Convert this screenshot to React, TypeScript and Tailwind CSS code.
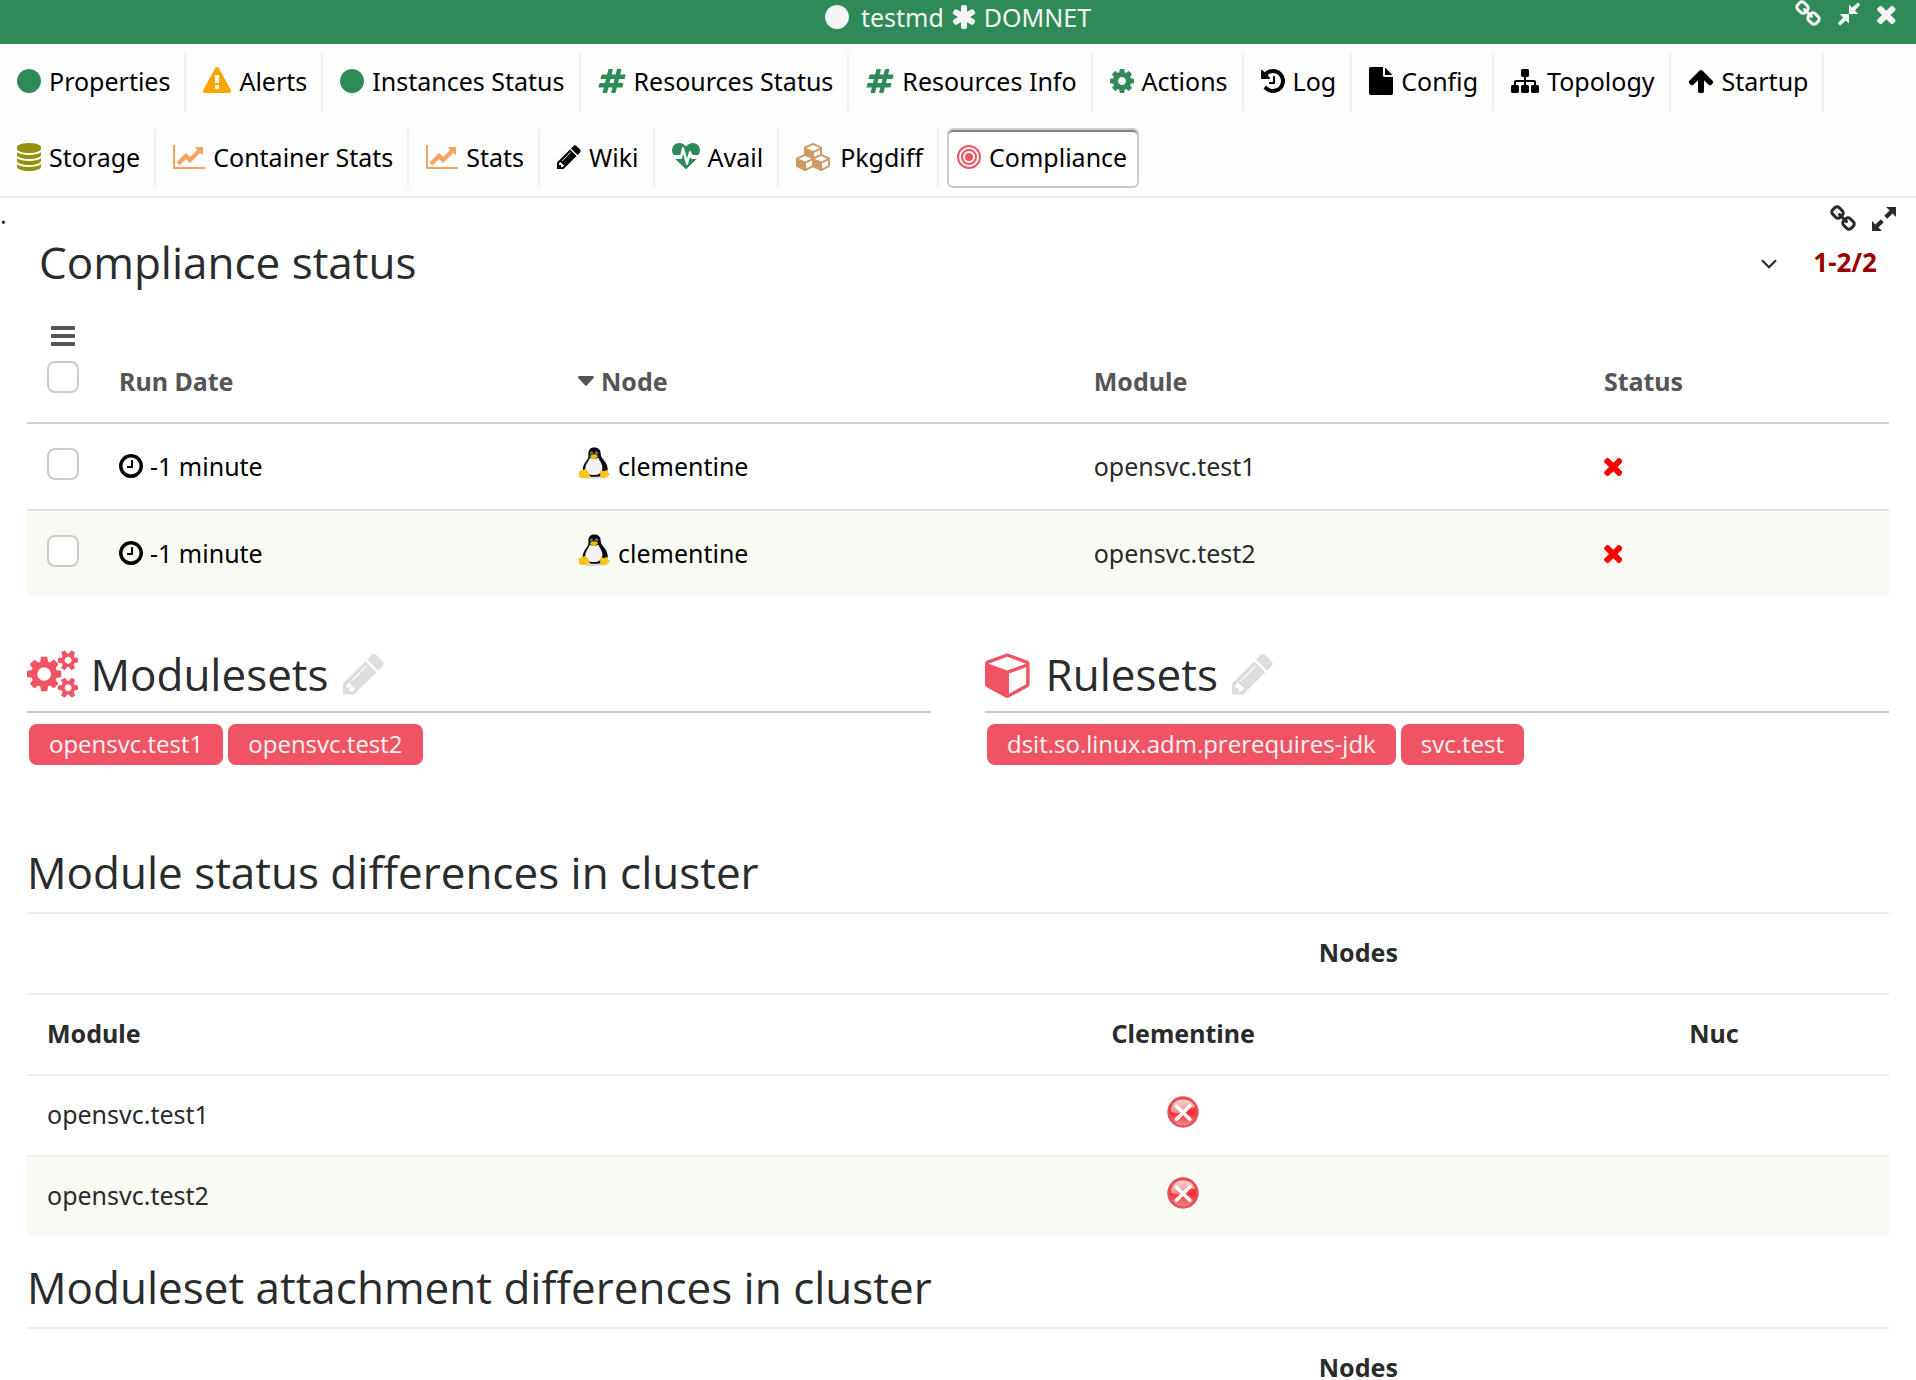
import type { ReactNode } from "react";

/* ---------- icons ---------- */

type Glyph = { box: string; d: string };

const circleD =
  "M1664 896q0 209-103 385.5t-279.5 279.5-385.5 103-385.5-103-279.5-279.5-103-385.5 103-385.5 279.5-279.5 385.5-103 385.5 103 279.5 279.5 103 385.5z";

const glyphs = {
  circle: { box: "128 0 1536 1792", d: circleD },
  warning: {
    box: "0 0 1792 1792",
    d: "M1024 1375v-190q0-14-9.5-23.5t-22.5-9.5h-192q-13 0-22.5 9.5t-9.5 23.5v190q0 14 9.5 23.5t22.5 9.5h192q13 0 22.5-9.5t9.5-23.5zm-2-374l18-459q0-12-10-19-13-11-24-11h-220q-11 0-24 11-10 7-10 21l17 457q0 10 10 16.5t24 6.5h185q14 0 23.5-6.5t10.5-16.5zm-14-934l768 1408q35 63-2 126-17 29-46.5 46t-63.5 17h-1536q-34 0-63.5-17t-46.5-46q-37-63-2-126l768-1408q17-31 47-49t65-18 65 18 47 49z",
  },
  hashtag: {
    box: "0 0 1792 1792",
    d: "M991 1024l64-256h-254l-64 256h254zm768-504l-56 224q-7 24-31 24h-327l-64 256h311q15 0 25 12 10 14 6 28l-56 224q-5 24-31 24h-327l-81 328q-7 24-31 24h-224q-16 0-26-12-9-12-6-28l78-312h-254l-81 328q-7 24-31 24h-225q-15 0-25-12-9-12-6-28l78-312h-311q-15 0-25-12-9-12-6-28l56-224q7-24 31-24h327l64-256h-311q-15 0-25-12-10-14-6-28l56-224q5-24 31-24h327l81-328q7-24 32-24h224q15 0 25 12 9 12 6 28l-78 312h254l81-328q7-24 32-24h224q15 0 25 12 9 12 6 28l-78 312h311q15 0 25 12 9 12 6 28z",
  },
  cog: {
    box: "128 0 1536 1792",
    d: "M1152 896q0-106-75-181t-181-75-181 75-75 181 75 181 181 75 181-75 75-181zm512-109v222q0 12-8 23t-20 13l-185 28q-19 54-39 91 35 50 107 138 10 12 10 25t-9 23q-27 37-99 108t-94 71q-12 0-26-9l-138-108q-44 23-91 38-16 136-29 186-7 28-36 28h-222q-14 0-24.5-8.5t-11.5-21.5l-28-184q-49-16-90-37l-141 107q-10 9-25 9-14 0-25-11-126-114-165-168-7-10-7-23 0-12 8-23 15-21 51-66.5t54-70.5q-27-50-41-99l-183-27q-13-2-21-12.5t-8-23.5v-222q0-12 8-23t19-13l186-28q14-46 39-92-40-57-107-138-10-12-10-24 0-10 9-23 26-36 98.5-107.5t94.5-71.5q13 0 26 10l138 107q44-23 91-38 16-136 29-186 7-28 36-28h222q14 0 24.5 8.5t11.5 21.5l28 184q49 16 90 37l142-107q9-9 24-9 13 0 25 10 129 119 165 170 7 8 7 22 0 12-8 23-15 21-51 66.5t-54 70.5q26 50 41 98l183 28q13 2 21 12.5t8 23.5z",
  },
  history: {
    box: "128 0 1536 1792",
    d: "M1664 896q0 156-61 298t-164 245-245 164-298 61q-172 0-327-72.5t-264-204.5q-7-10-6.5-22.5t8.5-20.5l137-138q10-9 25-9 16 2 23 12 73 95 179 147t225 52q104 0 198.5-40.5t163.5-109.5 109.5-163.5 40.5-198.5-40.5-198.5-109.5-163.5-163.5-109.5-198.5-40.5q-98 0-188 35.5t-160 101.5l137 138q31 30 14 69-17 40-59 40h-448q-26 0-45-19t-19-45v-448q0-42 40-59 39-17 69 14l130 129q107-101 244.5-156.5t284.5-55.5q156 0 298 61t245 164 164 245 61 298zm-640-288v448q0 14-9 23t-23 9h-320q-14 0-23-9t-9-23v-64q0-14 9-23t23-9h224v-352q0-14 9-23t23-9h64q14 0 23 9t9 23z",
  },
  file: {
    box: "128 0 1536 1792",
    d: "M1152 512v-472q22 14 36 28l408 408q14 14 28 36h-472zm-128 32q0 40 28 68t68 28h544v1056q0 40-28 68t-68 28h-1344q-40 0-68-28t-28-68v-1600q0-40 28-68t68-28h800v544z",
  },
  sitemap: {
    box: "0 0 1792 1792",
    d: "M1792 1248v320q0 40-28 68t-68 28h-320q-40 0-68-28t-28-68v-320q0-40 28-68t68-28h96v-192h-512v192h96q40 0 68 28t28 68v320q0 40-28 68t-68 28h-320q-40 0-68-28t-28-68v-320q0-40 28-68t68-28h96v-192h-512v192h96q40 0 68 28t28 68v320q0 40-28 68t-68 28h-320q-40 0-68-28t-28-68v-320q0-40 28-68t68-28h96v-192q0-52 38-90t90-38h512v-192h-96q-40 0-68-28t-28-68v-320q0-40 28-68t68-28h320q40 0 68 28t28 68v320q0 40-28 68t-68 28h-96v192h512q52 0 90 38t38 90v192h96q40 0 68 28t28 68z",
  },
  arrowUp: {
    box: "64 0 1664 1792",
    d: "M1675 971q0 51-37 90l-75 75q-38 38-91 38-54 0-90-38l-294-293v704q0 52-37.5 84.5t-90.5 32.5h-128q-53 0-90.5-32.5t-37.5-84.5v-704l-294 293q-36 38-90 38t-90-38l-75-75q-38-38-38-90 0-53 38-91l651-651q35-37 90-37 54 0 91 37l651 651q37 39 37 91z",
  },
  database: {
    box: "128 0 1536 1792",
    d: "M896 768q237 0 443-43t325-127v170q0 69-103 128t-280 93.5-385 34.5-385-34.5-280-93.5-103-128v-170q119 84 325 127t443 43zm0 768q237 0 443-43t325-127v170q0 69-103 128t-280 93.5-385 34.5-385-34.5-280-93.5-103-128v-170q119 84 325 127t443 43zm0-384q237 0 443-43t325-127v170q0 69-103 128t-280 93.5-385 34.5-385-34.5-280-93.5-103-128v-170q119 84 325 127t443 43zm0-1152q208 0 385 34.5t280 93.5 103 128v128q0 69-103 128t-280 93.5-385 34.5-385-34.5-280-93.5-103-128v-128q0-69 103-128t280-93.5 385-34.5z",
  },
  chart: {
    box: "0 0 2048 1792",
    d: "M2048 1536v128h-2048v-1536h128v1408h1920zm-128-1248v435q0 21-19.5 29.5t-35.5-7.5l-121-121-633 633q-10 10-23 10t-23-10l-233-233-416 416-192-192 585-585q10-10 23-10t23 10l233 233 464-464-121-121q-16-16-7.5-35.5t29.5-19.5h435q14 0 23 9t9 23z",
  },
  pencil: {
    box: "128 0 1536 1792",
    d: "M491 1536l91-91-235-235-91 91v107h128v128h107zm523-928q0-22-22-22-10 0-17 7l-542 542q-7 7-7 17 0 22 22 22 10 0 17-7l542-542q7-7 7-17zm-54-192l416 416-832 832h-416v-416zm683 96q0 53-37 90l-166 166-416-416 166-165q36-38 90-38 53 0 91 38l235 234q37 39 37 91z",
  },
  heartbeat: {
    box: "0 0 1792 1792",
    d: "M1280 1024h305q-5 6-10 10.5t-9 7.5l-3 4-623 600q-18 18-44 18t-44-18l-624-602q-5-2-21-20h369q22 0 39.5-13.5t22.5-34.5l70-281 190 667q6 20 23 33t39 13q21 0 38-13t23-33l146-485 56 112q18 35 57 35zm512-556q0 145-103 300h-369l-111-221q-8-17-25.5-27t-36.5-8q-45 5-56 46l-129 430-196-686q-6-20-23.5-33t-39.5-13-39 13.5-22 34.5l-116 464h-423q-103-155-103-300 0-220 127-344t351-124q62 0 126.5 21.5t120 58 95.5 68.5 76 68q36-36 76-68t95.5-68.5 120-58 126.5-21.5q224 0 351 124t127 344z",
  },
  cubes: {
    box: "0 0 2304 1792",
    d: "M640 1632l384-192v-314l-384 164v342zm-64-454l404-173-404-173-404 173zm1088 454l384-192v-314l-384 164v342zm-64-454l404-173-404-173-404 173zm-448-293l384-165v-266l-384 164v267zm-64-379l441-189-441-189-441 189zm1088 518v416q0 36-19 67t-52 47l-448 224q-25 14-57 14t-57-14l-448-224q-4-2-7-4-2 2-7 4l-448 224q-25 14-57 14t-57-14l-448-224q-33-16-52-47t-19-67v-416q0-38 21.5-70t56.5-48l434-186v-400q0-38 21.5-70t56.5-48l448-192q23-10 50-10t50 10l448 192q35 16 56.5 48t21.5 70v400l434 186q36 16 57 48t21 70z",
  },
  cube: {
    box: "0 0 1664 1792",
    d: "M896 1629l640-349v-636l-640 233v752zm-64-865l698-254-698-254-698 254zm832-252v768q0 35-18 65t-49 47l-704 384q-28 16-61 16t-61-16l-704-384q-31-17-49-47t-18-65v-768q0-40 23-73t61-47l704-256q22-8 44-8t44 8l704 256q38 14 61 47t23 73z",
  },
  cogs: {
    box: "0 0 1920 1792",
    d: "M896 896q0-106-75-181t-181-75-181 75-75 181 75 181 181 75 181-75 75-181zm768 512q0-52-38-90t-90-38-90 38-38 90q0 53 37.5 90.5t90.5 37.5 90.5-37.5 37.5-90.5zm0-1024q0-52-38-90t-90-38-90 38-38 90q0 53 37.5 90.5t90.5 37.5 90.5-37.5 37.5-90.5zm-384 421v185q0 10-7 19.5t-16 10.5l-155 24q-11 35-32 76 34 48 90 115 7 11 7 20 0 12-7 19-23 30-82.5 89.5t-78.5 59.5q-11 0-21-7l-115-90q-37 19-77 31-11 108-23 155-7 24-30 24h-186q-11 0-20-7.5t-10-17.5l-23-153q-34-10-75-31l-118 89q-7 7-20 7-11 0-21-8-144-133-144-160 0-9 7-19 10-14 41-53t47-61q-23-44-35-82l-152-24q-10-1-17-9.5t-7-19.5v-185q0-10 7-19.5t16-10.5l155-24q11-35 32-76-34-48-90-115-7-11-7-20 0-12 7-20 22-30 82-89t79-59q11 0 21 7l115 90q34-18 77-32 11-108 23-154 7-24 30-24h186q11 0 20 7.5t10 17.5l23 153q34 10 75 31l118-89q8-7 20-7 11 0 21 8 144 133 144 160 0 8-7 19-12 16-42 54t-45 60q23 48 34 82l152 23q10 2 17 10.5t7 19.5zm640 533v140q0 16-149 31-12 27-30 52 51 113 51 138 0 4-4 7-122 71-124 71-8 0-46-47t-52-68q-20 2-30 2t-30-2q-14 21-52 68t-46 47q-2 0-124-71-4-3-4-7 0-25 51-138-18-25-30-52-149-15-149-31v-140q0-16 149-31 13-29 30-52-51-113-51-138 0-4 4-7 4-2 35-20t59-34 30-16q8 0 46 46.5t52 67.5q20-2 30-2t30 2q51-71 92-112l6-2q4 0 124 70 4 3 4 7 0 25-51 138 17 23 30 52 149 15 149 31zm0-1024v140q0 16-149 31-12 27-30 52 51 113 51 138 0 4-4 7-122 71-124 71-8 0-46-47t-52-68q-20 2-30 2t-30-2q-14 21-52 68t-46 47q-2 0-124-71-4-3-4-7 0-25 51-138-18-25-30-52-149-15-149-31v-140q0-16 149-31 13-29 30-52-51-113-51-138 0-4 4-7 4-2 35-20t59-34 30-16q8 0 46 46.5t52 67.5q20-2 30-2t30 2q51-71 92-112l6-2q4 0 124 70 4 3 4 7 0 25-51 138 17 23 30 52 149 15 149 31z",
  },
  times: {
    box: "302 0 1188 1792",
    d: "M1490 1322q0 40-28 68l-136 136q-28 28-68 28t-68-28l-294-294-294 294q-28 28-68 28t-68-28l-136-136q-28-28-28-68t28-68l294-294-294-294q-28-28-28-68t28-68l136-136q28-28 68-28t68 28l294 294 294-294q28-28 68-28t68 28l136 136q28 28 28 68t-28 68l-294 294 294 294q28 28 28 68z",
  },
  asterisk: {
    box: "128 0 1536 1792",
    d: "M1546 1050q46 26 59.5 77.5t-12.5 97.5l-64 110q-26 46-77.5 59.5t-97.5-12.5l-266-153v307q0 52-38 90t-90 38h-128q-52 0-90-38t-38-90v-307l-266 153q-46 26-97.5 12.5t-77.5-59.5l-64-110q-26-46-12.5-97.5t59.5-77.5l266-154-266-154q-46-26-59.5-77.5t12.5-97.5l64-110q26-46 77.5-59.5t97.5 12.5l266 153v-307q0-52 38-90t90-38h128q52 0 90 38t38 90v307l266-153q46-26 97.5-12.5t77.5 59.5l64 110q26 46 12.5 97.5t-59.5 77.5l-266 154z",
  },
  chain: {
    box: "64 0 1664 1792",
    d: "M1520 1216q0-40-28-68l-208-208q-28-28-68-28-42 0-72 32 3 3 19 18.5t21.5 21.5 15 19 13 25.5 3.5 27.5q0 40-28 68t-68 28q-15 0-27.5-3.5t-25.5-13-19-15-21.5-21.5-18.5-19q-33 31-33 73 0 40 28 68l206 207q27 27 68 27 40 0 68-26l147-146q28-28 28-67zm-703-705q0-40-28-68l-206-207q-28-28-68-28-39 0-68 27l-147 146q-28 28-28 67 0 40 28 68l208 208q27 27 68 27 42 0 72-31-3-3-19-18.5t-21.5-21.5-15-19-13-25.5-3.5-27.5q0-40 28-68t68-28q15 0 27.5 3.5t25.5 13 19 15 21.5 21.5 18.5 19q33-31 33-73zm895 705q0 120-85 203l-147 146q-83 83-203 83-121 0-204-85l-206-207q-83-83-83-203 0-123 88-209l-88-88q-86 88-208 88-120 0-204-84l-208-208q-84-84-84-204t85-203l147-146q83-83 203-83 121 0 204 85l206 207q83 83 83 203 0 123-88 209l88 88q86-88 208-88 120 0 204 84l208 208q84 84 84 204z",
  },
  bars: {
    box: "128 0 1536 1792",
    d: "M1664 1344v128q0 26-19 45t-45 19h-1408q-26 0-45-19t-19-45v-128q0-26 19-45t45-19h1408q26 0 45 19t19 45zm0-512v128q0 26-19 45t-45 19h-1408q-26 0-45-19t-19-45v-128q0-26 19-45t45-19h1408q26 0 45 19t19 45zm0-512v128q0 26-19 45t-45 19h-1408q-26 0-45-19t-19-45v-128q0-26 19-45t45-19h1408q26 0 45 19t19 45z",
  },
  clock: {
    box: "128 0 1536 1792",
    d: "M1024 544v448q0 14-9 23t-23 9h-320q-14 0-23-9t-9-23v-64q0-14 9-23t23-9h224v-352q0-14 9-23t23-9h64q14 0 23 9t9 23zm416 352q0-148-73-273t-198-198-273-73-273 73-198 198-73 273 73 273 198 198 273 73 273-73 198-198 73-273zm224 0q0 209-103 385.5t-279.5 279.5-385.5 103-385.5-103-279.5-279.5-103-385.5 103-385.5 279.5-279.5 385.5-103 385.5 103 279.5 279.5 103 385.5z",
  },
} satisfies Record<string, Glyph>;

function Icon({ name, className = "" }: { name: keyof typeof glyphs; className?: string }) {
  return (
    <svg viewBox={glyphs[name].box} fill="currentColor" aria-hidden="true" className={`w-auto shrink-0 ${className}`}>
      <path d={glyphs[name].d} />
    </svg>
  );
}

function Bullseye() {
  return (
    <svg viewBox="128 0 1536 1792" fill="none" stroke="currentColor" strokeWidth="128" aria-hidden="true" className="h-7 w-auto shrink-0 text-[#f05464]">
      <circle cx="896" cy="896" r="256" fill="currentColor" stroke="none" />
      <circle cx="896" cy="896" r="448" />
      <circle cx="896" cy="896" r="704" />
    </svg>
  );
}

function ExpandIcon() {
  return (
    <svg viewBox="0 0 24 24" fill="currentColor" aria-hidden="true" className="size-6">
      <path d="M14 0h10v10l-3.4-3.4-5.4 5.2-3-3 5.4-5.2z" />
      <path d="M10 24H0V14l3.4 3.4 5.4-5.2 3 3-5.4 5.2z" />
    </svg>
  );
}

function CompressIcon() {
  return (
    <svg viewBox="0 0 24 24" fill="currentColor" aria-hidden="true" className="size-6">
      <path d="M12 12V2.4l3.2 3.2L20.900 .4l2.400 2.400-5.400 5.800 3.400 3.400z" />
      <path d="M12 12v9.600l-3.200-3.200L3.100 23.600.7 21.200l5.400-5.800L2.700 12z" />
    </svg>
  );
}

function Tux() {
  return (
    <svg viewBox="0 0 32 32" role="img" aria-label="Linux" className="size-8 shrink-0">
      <ellipse cx="16" cy="30" rx="14.500" ry="1.800" fill="#000" opacity=".14" />
      <path
        d="M16 .4c-3.900 0-5.700 2.700-5.600 6 .1 3.200.2 4.400-1.800 7.200C6.300 16.700 4.400 19.800 4.700 23.500c.3 3.800 5 6.300 11.500 6.300 7 0 13-2 13.500-6.300.5-4-1.900-8.300-4.600-11.300-1.900-2.300-2.400-3.600-2.500-6.200C22.500 2.200 19.900.4 16 .4z"
        fill="#0b0b0b"
      />
      <path
        d="M11.800 10.800c-.6 2.400-2.600 4.500-3.800 7.300-1.400 3.300-.8 6.500 1.900 8.400 2.700 2 8.800 2.200 11.500.3 2.700-1.900 3.500-5 2.700-8.200-.7-2.900-2.900-5.200-3.600-7.800-2.600 1.400-6.300 1.300-8.700 0z"
        fill="#f3f3f5"
      />
      <ellipse cx="13.600" cy="6.300" rx="1.500" ry="1.700" fill="#8a8a8a" />
      <ellipse cx="18.300" cy="6.300" rx="1.600" ry="1.800" fill="#8a8a8a" />
      <circle cx="14" cy="6.700" r=".8" fill="#111" />
      <circle cx="17.900" cy="6.700" r=".8" fill="#111" />
      <path d="M12 9.200c.9-1 2.500-1.900 4-1.900s3.200.8 4 1.800c-.4 1.500-2.400 2.900-4.100 2.900s-3.500-1.300-3.900-2.800z" fill="#f3b90c" />
      <path
        d="M5.200 23c-1 .6-3.200.4-4.100 1.400-.9 1.100.2 2.500-.3 3.900-.4 1.300.8 1.800 2.800 2.100 2 .3 4.300 1.200 6 .6 2.200-.7 2.800-2.500 1.700-4.300-1-1.700-2.700-4.700-4.300-4.600-.7.1-1.200.5-1.800.9z"
        fill="#f9c51c"
      />
      <path
        d="M22.700 23.600c1-1.200 1.900.3 3.200.3 1.500 0 2.800-1.500 3.500-.7.7.8.2 2 1.200 2.900 1 .9 1.600 1.500.3 2.500-1.400 1-3.300 2.300-5 2.600-1.900.3-3.600-.7-3.700-2.600-.1-1.700-.2-3.900.5-5z"
        fill="#f9c51c"
      />
    </svg>
  );
}

function ErrorBadge() {
  return (
    <svg viewBox="0 0 32 32" role="img" aria-label="Not compliant" className="mx-auto mb-2 block size-8">
      <defs>
        <linearGradient id="err-fill" x1="0" y1="0" x2="0" y2="1">
          <stop offset="0" stopColor="#ff4a4e" />
          <stop offset=".55" stopColor="#fb2f34" />
          <stop offset="1" stopColor="#ea9396" />
        </linearGradient>
        <linearGradient id="err-gloss" x1="0" y1="0" x2="0" y2="1">
          <stop offset="0" stopColor="#fbeaea" />
          <stop offset="1" stopColor="#ea9a9c" />
        </linearGradient>
      </defs>
      <circle cx="16" cy="16" r="14.500" fill="url(#err-fill)" stroke="#dc5358" strokeWidth="2.400" />
      <path d="M4 15.500C4 8 9 3.600 16 3.600c6.500 0 11 4 12 8-5 .2-8 1.400-12 3.900s-8 2.500-12 0z" fill="url(#err-gloss)" opacity=".85" />
      <path d="M9.600 10.200l13.200 13M22.800 10L9.400 23.200" stroke="#fff" strokeWidth="3.600" strokeLinecap="round" />
    </svg>
  );
}

/* ---------- tabs ---------- */

type Tab = { label: string; icon: keyof typeof glyphs; color: string };

const tabs: Tab[] = [
  { label: "Properties", icon: "circle", color: "text-[#2e8b57]" },
  { label: "Alerts", icon: "warning", color: "text-[#ffa500]" },
  { label: "Instances Status", icon: "circle", color: "text-[#2e8b57]" },
  { label: "Resources Status", icon: "hashtag", color: "text-[#2e8b57]" },
  { label: "Resources Info", icon: "hashtag", color: "text-[#2e8b57]" },
  { label: "Actions", icon: "cog", color: "text-[#2e8b57]" },
  { label: "Log", icon: "history", color: "text-black" },
  { label: "Config", icon: "file", color: "text-black" },
  { label: "Topology", icon: "sitemap", color: "text-black" },
  { label: "Startup", icon: "arrowUp", color: "text-black" },
  { label: "Storage", icon: "database", color: "text-[#95910f]" },
  { label: "Container Stats", icon: "chart", color: "text-[#f4a460]" },
  { label: "Stats", icon: "chart", color: "text-[#f4a460]" },
  { label: "Wiki", icon: "pencil", color: "text-black" },
  { label: "Avail", icon: "heartbeat", color: "text-[#2e8b57]" },
  { label: "Pkgdiff", icon: "cubes", color: "text-[#cd9965]" },
];

function TabBar() {
  return (
    <nav className="flex flex-wrap gap-y-[18px] border-b-2 border-[#eee] bg-[#fdfdfd] py-[9px] text-black">
      {tabs.map((t) => (
        <button key={t.label} type="button" className="flex h-[58px] items-center gap-2 border-r-2 border-[#f0f0f0] pr-[14px] pb-[2px] pl-[17px]">
          <Icon name={t.icon} className={`h-7 ${t.color}`} />
          {t.label}
        </button>
      ))}
      <button
        type="button"
        aria-pressed="true"
        className="-my-px ml-2 flex h-[60px] items-center gap-2 rounded-md border-2 border-[#ccc] bg-white pr-[10px] pb-[2px] pl-2 shadow-[inset_0_2px_0_#808080]"
      >
        <Bullseye />
        Compliance
      </button>
    </nav>
  );
}

/* ---------- shared pieces ---------- */

function Check({ label }: { label: string }) {
  return <input type="checkbox" aria-label={label} className="block size-8 appearance-none rounded-lg border-2 border-[#ccc] bg-white" />;
}

function IconButton({ label, children }: { label: string; children: ReactNode }) {
  return (
    <button type="button" aria-label={label} className="flex items-center">
      {children}
    </button>
  );
}

const runs = [
  { date: "-1 minute", node: "clementine", module: "opensvc.test1" },
  { date: "-1 minute", node: "clementine", module: "opensvc.test2" },
];

function StatusTable() {
  const th = "px-5 pb-[26px] text-left align-bottom border-b-2 border-[#d0d0d0]";
  const td = "border-b-2 border-[#e3e3e3] px-5 pb-[2px] group-last:border-b-0";
  return (
    <table className="mt-[25px] w-full table-fixed border-separate border-spacing-0">
      <colgroup>
        <col className="w-[72px]" />
        <col className="w-[24.650%]" />
        <col className="w-[27.700%]" />
        <col className="w-[27.400%]" />
        <col />
      </colgroup>
      <thead>
        <tr className="font-semibold text-[#555]">
          <th className="border-b-2 border-[#d0d0d0] px-5 pt-3 pb-[29px]">
            <div className="flex flex-col items-center gap-[11px]">
              <IconButton label="Table menu">
                <Icon name="bars" className="h-7" />
              </IconButton>
              <Check label="Select all" />
            </div>
          </th>
          <th className={th}>Run Date</th>
          <th className={th}>
            <span className="flex items-center gap-[7px]">
              <svg viewBox="0 0 16 10" fill="currentColor" aria-hidden="true" className="h-[10px] w-4">
                <path d="M1 0h14q1.500.6.6 1.900L8.800 9.400q-.8.8-1.600 0L.4 1.900Q-.5.6 1 0z" />
              </svg>
              Node
            </span>
          </th>
          <th className={th}>Module</th>
          <th className={th}>Status</th>
        </tr>
      </thead>
      <tbody>
        {runs.map((r) => (
          <tr key={r.module} className="group even:bg-[#f9faf4]">
            <td className="h-[87px] border-b-2 border-[#e3e3e3] px-5 pb-[6px] group-last:h-[85px] group-last:border-b-0">
              <Check label={`Select ${r.module}`} />
            </td>
            <td className={`${td} text-black`}>
              <span className="flex items-center gap-[7px]">
                <Icon name="clock" className="h-7" />
                {r.date}
              </span>
            </td>
            <td className={`${td} text-black`}>
              <a href="#node" className="flex items-center gap-2">
                <span className="pb-[6px]">
                  <Tux />
                </span>
                {r.node}
              </a>
            </td>
            <td className={td}>{r.module}</td>
            <td className={`${td} text-[#f00]`}>
              <Icon name="times" className="h-7" />
            </td>
          </tr>
        ))}
      </tbody>
    </table>
  );
}

const headingFont = "font-['Open_Sans',sans-serif] text-[44px]";

function AttachedSets({ title, icon, items }: { title: string; icon: "cogs" | "cube"; items: string[] }) {
  return (
    <section>
      <h3 className={`flex h-[76px] items-center border-b-2 border-[#c8c8c8] ${headingFont}`}>
        <Icon name={icon} className={icon === "cube" ? "mr-4 h-12 text-[#f05464]" : "mr-3 h-12 text-[#f05464]"} />
        {title}
        <button type="button" aria-label={`Edit ${title.toLowerCase()}`} className="ml-[14px] text-[#ddd]">
          <Icon name="pencil" className="h-12" />
        </button>
      </h3>
      <ul className="flex flex-wrap gap-[5px] px-[2px] pt-[11px]">
        {items.map((s) => (
          <li key={s} className="flex h-[41px] items-center rounded-lg bg-[#f05464] px-5 pb-[2px] font-['Open_Sans',sans-serif] text-2xl text-[#f5f5f5]">
            {s}
          </li>
        ))}
      </ul>
    </section>
  );
}

function Differences({ title, nodes, modules }: { title: string; nodes: string[]; modules: string[] }) {
  const cell = "h-[81px] border-t-2 border-[#eee] px-5 pb-[3px]";
  return (
    <section>
      <h2 className={`pt-[21px] pb-[10px] leading-[60px] ${headingFont}`}>{title}</h2>
      <table className="w-full table-fixed border-separate border-spacing-0">
        <colgroup>
          <col className="w-[43%]" />
          <col className="w-[38.200%]" />
          <col />
        </colgroup>
        <thead className="font-semibold">
          <tr>
            <td className={cell} />
            <th colSpan={2} className={cell}>
              Nodes
            </th>
          </tr>
          {nodes.length > 0 && (
            <tr>
              <th className={`${cell} text-left`}>Module</th>
              {nodes.map((n) => (
                <th key={n} className={cell}>
                  {n}
                </th>
              ))}
            </tr>
          )}
        </thead>
        <tbody>
          {modules.map((m) => (
            <tr key={m} className="even:bg-[#f9faf4]">
              <td className={cell}>{m}</td>
              <td className="h-[81px] border-t-2 border-[#eee]">
                <ErrorBadge />
              </td>
              <td className={cell} />
            </tr>
          ))}
        </tbody>
      </table>
    </section>
  );
}

export default function App() {
  return (
    <div className="min-h-screen bg-white font-['Noto_Sans',sans-serif] text-[25px] leading-[30px] text-[#292b2c]">
      <header className="relative flex h-11 items-start justify-center bg-[#2e8b57] pt-[2px] text-[#f5f5f5]">
        <h1 className="flex items-center gap-2">
          <Icon name="circle" className="mr-1 h-7" />
          testmd
          <Icon name="asterisk" className="h-7" />
          DOMNET
        </h1>
        <div className="absolute top-0 right-5 flex items-center gap-4">
          <IconButton label="Link">
            <Icon name="chain" className="h-7" />
          </IconButton>
          <IconButton label="Restore">
            <CompressIcon />
          </IconButton>
          <IconButton label="Close">
            <Icon name="times" className="h-7" />
          </IconButton>
        </div>
      </header>

      <TabBar />

      <main>
        <div className="flex h-[41px] justify-between pr-5">
          <span className="pt-px">.</span>
          <div className="flex items-center gap-4 pt-px">
            <IconButton label="Link">
              <Icon name="chain" className="h-7" />
            </IconButton>
            <IconButton label="Expand">
              <ExpandIcon />
            </IconButton>
          </div>
        </div>

        <div className="px-[27px]">
          <div className="flex items-center justify-between px-3">
            <h2 className={`leading-[46px] ${headingFont}`}>Compliance status</h2>
            <div className="flex items-center gap-9">
              <button type="button" aria-label="Collapse">
                <svg viewBox="0 0 16 10" fill="none" stroke="currentColor" strokeWidth="2.200" aria-hidden="true" className="mt-1 h-[10px] w-4">
                  <path d="M1 1.200l7 7 7-7" />
                </svg>
              </button>
              <span className="text-[26px] font-bold text-[#990000]">1-2/2</span>
            </div>
          </div>

          <StatusTable />

          <div className="mt-[41px] mb-14 grid grid-cols-2 gap-[54px]">
            <AttachedSets title="Modulesets" icon="cogs" items={["opensvc.test1", "opensvc.test2"]} />
            <AttachedSets title="Rulesets" icon="cube" items={["dsit.so.linux.adm.prerequires-jdk", "svc.test"]} />
          </div>

          <Differences
            title="Module status differences in cluster"
            nodes={["Clementine", "Nuc"]}
            modules={["opensvc.test1", "opensvc.test2"]}
          />
          <Differences title="Moduleset attachment differences in cluster" nodes={[]} modules={[]} />
        </div>
      </main>
    </div>
  );
}
